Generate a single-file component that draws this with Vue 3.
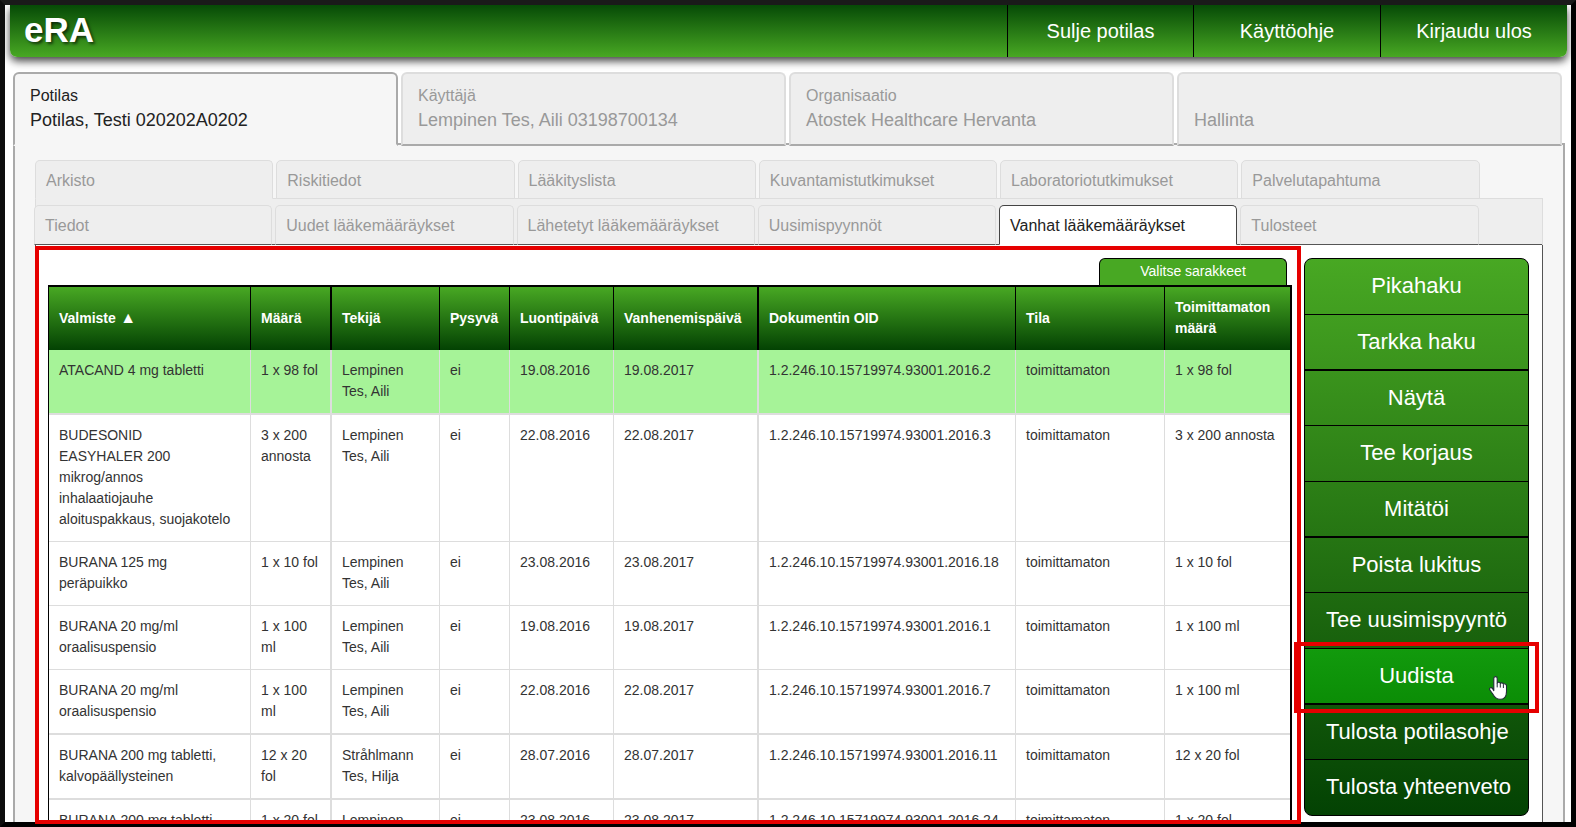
<script setup>
const headerActions = ['Sulje potilas', 'Käyttöohje', 'Kirjaudu ulos']

const mainTabs = [
  { label: 'Potilas', value: 'Potilas, Testi 020202A0202', active: true },
  { label: 'Käyttäjä', value: 'Lempinen Tes, Aili 03198700134' },
  { label: 'Organisaatio', value: 'Atostek Healthcare Hervanta' },
  { label: '', value: 'Hallinta' }
]

const upperTabs = ['Arkisto', 'Riskitiedot', 'Lääkityslista', 'Kuvantamistutkimukset', 'Laboratoriotutkimukset', 'Palvelutapahtuma']
const lowerTabs = ['Tiedot', 'Uudet lääkemääräykset', 'Lähetetyt lääkemääräykset', 'Uusimispyynnöt', 'Vanhat lääkemääräykset', 'Tulosteet']
const activeLower = 'Vanhat lääkemääräykset'

const columns = [
  { name: 'Valmiste', cls: 'c-product' },
  { name: 'Määrä', cls: 'c-amount' },
  { name: 'Tekijä', cls: 'c-author' },
  { name: 'Pysyvä', cls: 'c-permanent' },
  { name: 'Luontipäivä', cls: 'c-created' },
  { name: 'Vanhenemispäivä', cls: 'c-expires' },
  { name: 'Dokumentin OID', cls: 'c-oid' },
  { name: 'Tila', cls: 'c-state' },
  { name: 'Toimittamaton määrä', cls: 'c-left' }
]

const oid = '1.2.246.10.15719974.93001.2016.'
const state = 'toimittamaton'
const aili = 'Lempinen Tes, Aili'
const rows = [
  { cells: ['ATACAND 4 mg tabletti', '1 x 98 fol', aili, 'ei', '19.08.2016', '19.08.2017', oid + '2', state, '1 x 98 fol'], selected: true, thick: true },
  { cells: ['BUDESONID EASYHALER\u00a0200 mikrog/annos inhalaatiojauhe aloituspakkaus, suojakotelo', '3 x 200 annosta', aili, 'ei', '22.08.2016', '22.08.2017', oid + '3', state, '3 x 200 annosta'] },
  { cells: ['BURANA 125 mg peräpuikko', '1 x 10 fol', aili, 'ei', '23.08.2016', '23.08.2017', oid + '18', state, '1 x 10 fol'] },
  { cells: ['BURANA 20 mg/ml oraalisuspensio', '1 x 100 ml', aili, 'ei', '19.08.2016', '19.08.2017', oid + '1', state, '1 x 100 ml'] },
  { cells: ['BURANA 20 mg/ml oraalisuspensio', '1 x 100 ml', aili, 'ei', '22.08.2016', '22.08.2017', oid + '7', state, '1 x 100 ml'], thick: true },
  { cells: ['BURANA 200 mg tabletti, kalvopäällysteinen', '12 x 20 fol', 'Stråhlmann Tes, Hilja', 'ei', '28.07.2016', '28.07.2017', oid + '11', state, '12 x 20 fol'], thick: true },
  { cells: ['BURANA 200 mg tabletti,', '1 x 20 fol', aili, 'ei', '23.08.2016', '23.08.2017', oid + '24', state, '1 x 20 fol'] }
]

const actions = ['Pikahaku', 'Tarkka haku', 'Näytä', 'Tee korjaus', 'Mitätöi', 'Poista lukitus', 'Tee uusimispyyntö', 'Uudista', 'Tulosta potilasohje', 'Tulosta yhteenveto']
</script>

<template>
  <div class="screen">
    <div class="frame">
      <header class="topbar">
        <h1 class="brand">eRA</h1>
        <nav class="topnav">
          <button v-for="a in headerActions" :key="a" type="button">{{ a }}</button>
        </nav>
      </header>

      <main class="main">
        <nav class="main-tabs">
          <button v-for="t in mainTabs" :key="t.value" type="button" class="main-tab" :class="{ active: t.active }">
            <span class="tab-label">{{ t.label }}</span>
            <span class="tab-value">{{ t.value }}</span>
          </button>
        </nav>

        <section class="panel">
          <nav class="sub-tabs upper">
            <button v-for="t in upperTabs" :key="t" type="button">{{ t }}</button>
          </nav>
          <div class="strip">
            <nav class="sub-tabs lower">
              <button v-for="t in lowerTabs" :key="t" type="button" :class="{ active: t === activeLower }">{{ t }}</button>
            </nav>
          </div>

          <div class="content">
            <div class="list">
              <button type="button" class="choose">Valitse sarakkeet</button>
              <table>
                <colgroup>
                  <col v-for="c in columns" :key="c.name" :class="c.cls">
                </colgroup>
                <thead>
                  <tr>
                    <th v-for="(c, i) in columns" :key="c.name" scope="col">{{ c.name }}<span v-if="i === 0" class="sort"> ▲</span></th>
                  </tr>
                </thead>
                <tbody>
                  <tr v-for="(r, i) in rows" :key="i" :class="{ selected: r.selected, thick: r.thick }">
                    <td v-for="(c, j) in r.cells" :key="j">{{ c }}</td>
                  </tr>
                </tbody>
              </table>
            </div>

            <div class="actions">
              <button v-for="a in actions" :key="a" type="button" :class="{ hovered: a === 'Uudista' }">
                {{ a }}
                <template v-if="a === 'Uudista'">
                  <span class="mark-action"></span>
                  <svg class="pointer" width="18" height="24" viewBox="0 0 18 24" aria-hidden="true">
                    <path d="M4.8 14.6V2.4C4.8 0 8.2 0 8.2 2.4V7C8.6 5.9 11.1 6 11.3 7.5C11.8 6.5 14.1 6.7 14.4 8.2C15 7.4 17.5 7.7 17.5 9.9V15.4C17.5 20 15.2 23.3 11 23.3C7 23.3 5.2 20.8 3.6 17.8L.9 14C-.4 12.2 2.2 10.6 3.6 12.6Z" fill="#fff" stroke="#222c38" stroke-width="1.1" stroke-linejoin="round" />
                    <path d="M8.2 7V11.4M11.3 7.5V11.6M14.4 8.4V12" fill="none" stroke="#222c38" stroke-width="1" />
                  </svg>
                </template>
              </button>
            </div>
          </div>
        </section>
      </main>
    </div>
    <div class="mark-list"></div>
  </div>
</template>

<style>
body {
  margin: 0;
  overflow: hidden;
}
</style>

<style scoped>
.screen {
  position: relative;
  height: 100vh;
  font-family: "Liberation Sans", Arial, sans-serif;
  color: #333;
}
.screen *,
.screen {
  box-sizing: border-box;
}
button {
  margin: 0;
  border: 0;
  border-radius: 0;
  background: none;
  font: inherit;
  color: inherit;
  cursor: pointer;
}
.frame {
  height: 100%;
  overflow: hidden;
  border: 5px solid #000;
  border-top-color: #1a1a1a;
  border-left-color: #0d0d0d;
  background: #fff;
}

/* Top bar */
.topbar {
  display: flex;
  height: 52px;
  margin: 0 4px 0 5px;
  border-radius: 0 0 7px 7px;
  background: linear-gradient(#064a06, #48a823);
  box-shadow: 0 4px 8px rgba(0, 0, 0, 0.75);
  color: #fff;
}
.brand {
  flex: 1;
  margin: 0;
  padding-left: 14px;
  font-size: 35px;
  line-height: 50px;
  text-shadow: 2px 2px 3px rgba(0, 0, 0, 0.6);
}
.topnav {
  display: flex;
}
.topnav button {
  width: 187px;
  border-left: 1px solid #000;
  font-size: 20px;
}
.topnav button:first-child {
  width: 186px;
}

/* Main tabs */
.main {
  margin: 15px 6px 0 8px;
}
.main-tabs {
  position: relative;
  z-index: 1;
  display: grid;
  grid-template-columns: repeat(4, 1fr);
  gap: 3px;
  margin-bottom: -3px;
  padding-right: 3px;
}
.main-tab {
  display: flex;
  flex-direction: column;
  justify-content: flex-end;
  padding: 9px 15px 11px;
  border: 2px solid #ddd;
  border-bottom-color: #aaa;
  border-radius: 6px 6px 0 0;
  background: #eee;
  color: #999;
  line-height: 25px;
  text-align: left;
}
.main-tab.active {
  border-color: #aaa;
  border-bottom-color: #f6f6f6;
  background: #f6f6f6;
  color: #222;
}
.tab-label {
  font-size: 16px;
}
.tab-value {
  font-size: 18px;
}
.panel {
  padding: 15px 20px 0;
  border: 2px solid #aaa;
  background: #f6f6f6;
}

/* Sub tabs */
.sub-tabs {
  position: relative;
  display: flex;
}
.sub-tabs button {
  width: 15.8%;
  margin-right: 0.2%;
  padding: 2px 10px 0;
  border: 1px solid #ddd;
  border-radius: 5px 5px 0 0;
  background: #eee;
  color: #999;
  font-size: 16px;
  text-align: left;
  white-space: nowrap;
}
.upper {
  z-index: 1;
}
.upper button {
  line-height: 35px;
}
.upper button:first-child {
  border-bottom-color: #eee;
}
.strip {
  position: relative;
  margin-top: -1px;
  padding-top: 6px;
  border: 1px solid #ddd;
  border-bottom: 0;
  background: #eee;
}
.strip::after {
  content: "";
  position: absolute;
  right: 0;
  bottom: 0;
  left: 0;
  height: 1px;
  background: #555;
}
.lower {
  z-index: 1;
  margin-left: -2px;
}
.lower button {
  border-bottom-color: #555;
  line-height: 36px;
}
.lower button.active {
  border-color: #444;
  border-bottom-color: #fff;
  background: #fff;
  color: #222;
}

/* Content */
.content {
  display: flex;
  align-items: flex-start;
  gap: 12px;
  margin-top: -1px;
  padding: 13px 13px 13px 12px;
  border: 1px solid #555;
  background: #fff;
}
.list {
  display: flex;
  flex: 1;
  flex-direction: column;
}
.choose {
  align-self: flex-end;
  width: 188px;
  margin-right: 5px;
  padding: 0 0 2px;
  border: 1px solid #000;
  border-bottom: 0;
  border-radius: 6px 6px 0 0;
  background: #48a823;
  color: #fff;
  font-size: 14px;
  line-height: 24px;
}
table {
  width: 100%;
  table-layout: fixed;
  border: solid #000;
  border-width: 2px 2px 0 1px;
  border-collapse: separate;
  border-spacing: 0;
  font-size: 14px;
  line-height: 21px;
}
.c-amount { width: 81px; }
.c-author { width: 108px; }
.c-permanent { width: 70px; }
.c-created { width: 104px; }
.c-expires { width: 145px; }
.c-oid { width: 257px; }
.c-state { width: 149px; }
.c-left { width: 125px; }
thead {
  background: linear-gradient(#48a823, #034203);
  color: #fff;
}
th,
td {
  padding: 10px 10px 11px;
  border: 0 solid #ddd;
  text-align: left;
}
th {
  border-right: 1px solid #000;
}
td {
  border-width: 0 1px 1px 0;
  vertical-align: top;
}
td:first-child {
  padding-right: 16px;
}
th:nth-child(2),
th:nth-child(6),
td:nth-child(2),
td:nth-child(6) {
  border-right-width: 2px;
}
th:last-child,
td:last-child {
  border-right-width: 0;
}
.sort {
  font-size: 16px;
  line-height: 16px;
}
.thick td {
  border-bottom-width: 2px;
}
.selected td {
  background: #a6f398;
}

/* Action menu */
.actions {
  display: flex;
  flex-direction: column;
  width: 225px;
  border: 1px solid #000;
  border-radius: 8px;
  background: linear-gradient(#48a823, #034203);
}
.actions button {
  position: relative;
  min-height: 56px;
  padding: 0 21px 1px;
  border-bottom: 1px solid #000;
  color: #fff;
  font-size: 22px;
  white-space: nowrap;
}
.actions button:nth-child(3n),
.actions button:last-child {
  min-height: 55px;
}
.actions button:nth-child(3n + 2) {
  border-bottom-width: 2px;
}
.actions button:last-child {
  border-bottom: 0;
}
.actions .hovered {
  background: linear-gradient(#129a0d, #0b8d06);
}

/* Highlights and pointer */
.mark-list {
  position: absolute;
  top: 246px;
  right: 275px;
  bottom: 3px;
  left: 35px;
  border: 4px solid #e60000;
  pointer-events: none;
}
.mark-action {
  position: absolute;
  inset: -7px -11px -10px;
  border: 4px solid #e60000;
}
.pointer {
  position: absolute;
  top: 27px;
  left: 184px;
}
</style>
